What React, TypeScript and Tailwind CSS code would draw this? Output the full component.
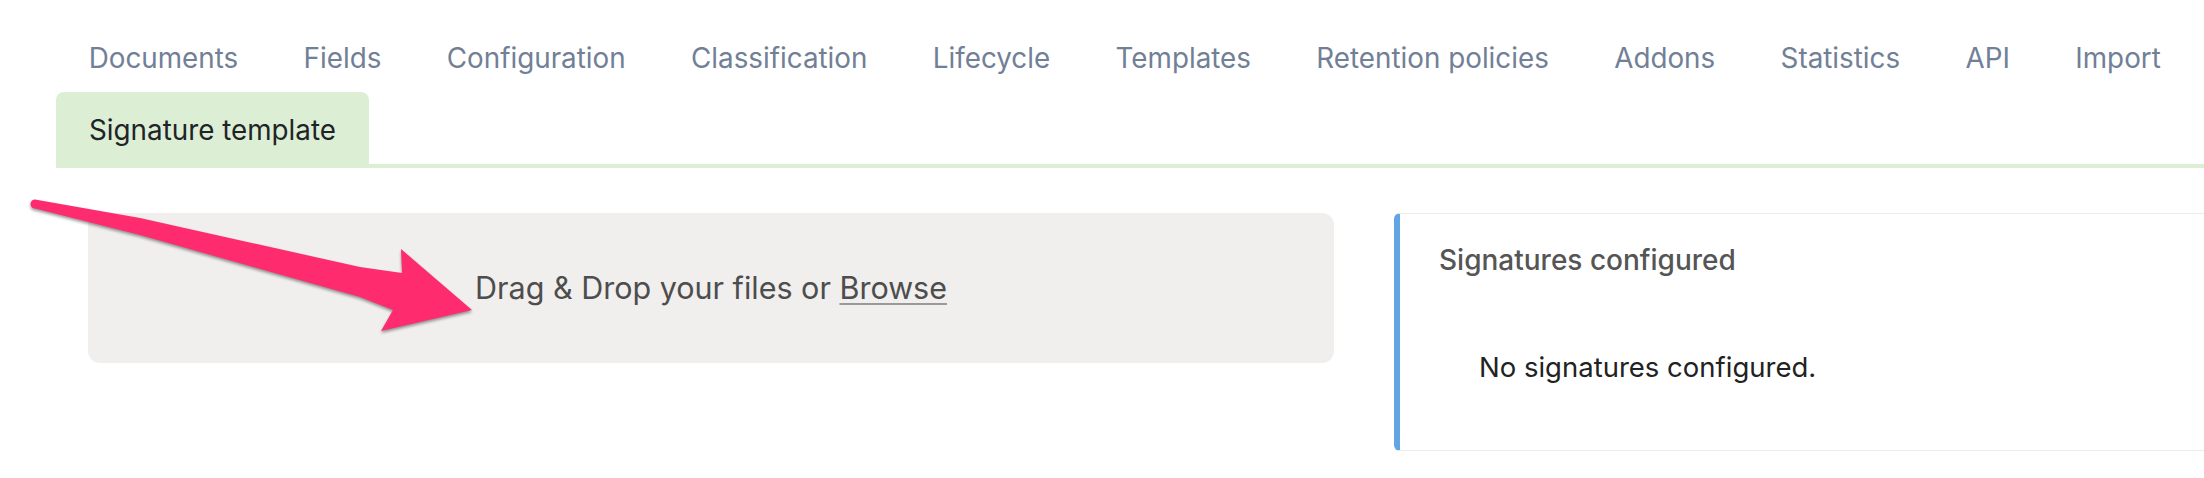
import React from "react";

const tabs = [
  "Documents",
  "Fields",
  "Configuration",
  "Classification",
  "Lifecycle",
  "Templates",
  "Retention policies",
  "Addons",
  "Statistics",
  "API",
  "Import",
  "Signature template",
];

export default function App() {
  const active = "Signature template";

  return (
    <div className="relative h-[478px] w-[2204px] overflow-hidden bg-white font-['Inter','Liberation_Sans',sans-serif]">
      <nav className="ml-[56px] flex flex-wrap border-b-4 border-[#dcefd5] pt-[20px]">
        {tabs.map((t) => (
          <a
            key={t}
            href="#"
            className={
              t === active
                ? "flex h-[72px] items-center rounded-t-[8px] bg-[#dcefd5] px-[33px] pt-[5px] text-[27.8px] text-[#1f2429]"
                : "flex h-[72px] items-center px-[32.7px] pt-[5px] text-[27.8px] text-[#718096]"
            }
          >
            {t}
          </a>
        ))}
      </nav>

      <div className="mt-[45px] flex gap-[60px] pl-[88px]">
        <div className="flex h-[150px] w-[1246px] shrink-0 items-center justify-center rounded-[12px] bg-[#f0efed] text-[30.5px] text-[#4d4d4d]">
          <span>
            Drag &amp; Drop your files or{" "}
            <span className="underline decoration-[#999] decoration-2 underline-offset-4">Browse</span>
          </span>
        </div>

        <div className="h-[238px] w-[900px] shrink-0 rounded-l-[6px] border border-l-[6px] border-[#ececec] border-l-[#63a4e3] pl-[39px] pt-[28px]">
          <h3 className="text-[28px] font-medium leading-[36px] text-[#555]">Signatures configured</h3>
          <p className="mt-[71px] pl-[40px] text-[27.5px] leading-[36px] text-[#222]">
            No signatures configured.
          </p>
        </div>
      </div>

      {/* annotation arrow */}
      <svg
        className="pointer-events-none absolute left-0 top-0 drop-shadow-[0_2px_1.5px_rgba(0,0,0,0.4)]"
        width="2204"
        height="478"
        aria-hidden="true"
      >
        <path
          d="M35 199.5 L140 218 L360 267 L402 273 L401 249 L472 310 L381 331 L393 310 L360 297 L140 235 L35 208.5 A4.5 4.5 0 0 1 35 199.5 Z"
          fill="#fe2c6e"
        />
      </svg>
    </div>
  );
}
